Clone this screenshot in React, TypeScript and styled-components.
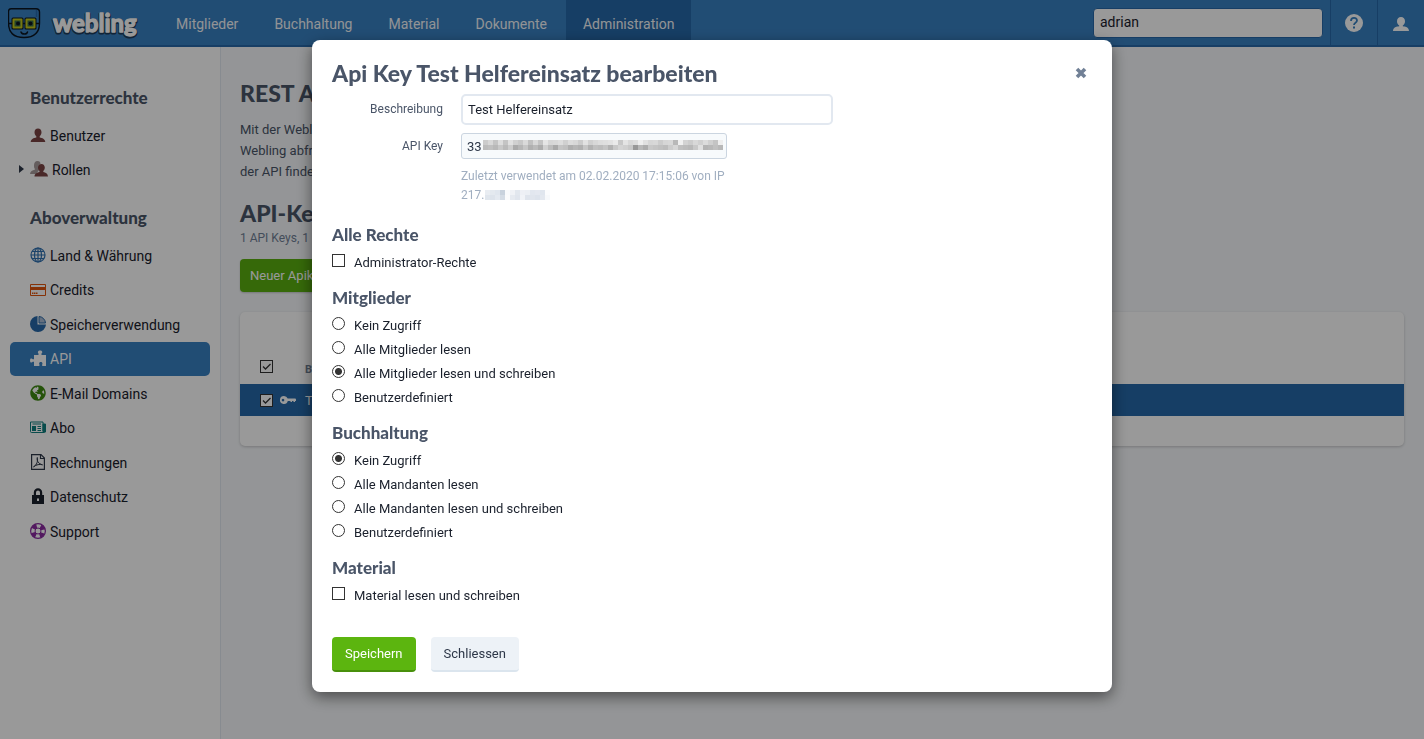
import React, { useId } from "react";
import styled, { createGlobalStyle, css } from "styled-components";
import { FaGlobeAmericas } from "react-icons/fa";

const Global = createGlobalStyle`
  *, *::before, *::after { box-sizing: border-box; }
  html, body, #root { height: 100%; }
  body {
    margin: 0;
    font-family: Roboto, "Noto Sans", sans-serif;
    font-size: 14px;
    color: #1a202c;
    background: #f7f9fc;
  }
  h1, h2, h3, p, ul { margin: 0; padding: 0; }
  h1, h2, h3 { font-family: Lato, "Open Sans", sans-serif; font-weight: 900; color: #4a5568; }
  button, input { font: inherit; }
`;

/* ---------- page ---------- */

const Page = styled.div`
  min-height: 100%;
  display: flex;
  flex-direction: column;
`;

const Header = styled.header`
  display: flex;
  height: 47px;
  background: #3880c2;
  border-bottom: 2px solid #2768a8;
`;

const Brand = styled.a`
  display: flex;
  align-items: center;
  width: 159px;
  padding-left: 8px;
`;

const Nav = styled.nav`
  display: flex;
  flex: 1;
  gap: 2px;
`;

const NavLink = styled.a<{ $active?: boolean }>`
  display: flex;
  align-items: center;
  padding: 2px 17px 0;
  font-size: 14px;
  text-decoration: none;
  color: #f3f6f9;
  background: ${(p) => (p.$active ? "#2568a8" : "transparent")};
`;

const Search = styled.input`
  align-self: center;
  width: 230px;
  height: 30px;
  margin-right: 7px;
  padding: 0 6px 2px;
  border: 1px solid #2768a8;
  border-radius: 4px;
  background: #fff;
  color: #1a202c;
  font-size: 14px;
  outline: none;
`;

const HeaderButton = styled.button`
  display: flex;
  align-items: center;
  justify-content: center;
  width: 47px;
  padding: 0;
  border: 0;
  border-left: 1px solid #2768a8;
  background: none;
  color: #fff;
`;

const Body = styled.div`
  display: flex;
  flex: 1;
`;

const Sidebar = styled.aside`
  width: 221px;
  flex: none;
  padding: 39px 10px 0;
  background: #fff;
  border-right: 1px solid #e2e8f0;
`;

const SideTitle = styled.h2`
  padding-left: 20px;
  font-size: 17px;
  line-height: 24px;
`;

const SideList = styled.ul`
  list-style: none;
  margin: 9px 0 19px;
  li:nth-child(even) { margin-bottom: 1px; }
`;

const SideLink = styled.a<{ $active?: boolean }>`
  position: relative;
  display: flex;
  align-items: center;
  gap: 4px;
  height: 34px;
  padding-left: 20px;
  border-radius: 5px;
  font-size: 14px;
  text-decoration: none;
  color: ${(p) => (p.$active ? "#fff" : "#1a202c")};
  background: ${(p) => (p.$active ? "#3880c2" : "transparent")};
  svg { flex: none; margin-bottom: 3px; }
`;

const Caret = styled.span`
  position: absolute;
  left: 9px;
  top: 12px;
  border: 4px solid transparent;
  border-left: 5px solid #2d3748;
  border-right: 0;
`;

const Main = styled.main`
  flex: 1;
  padding: 30px 20px 30px 19px;
`;

const MainTitle = styled.h1`
  font-size: 23px;
  line-height: 32px;
`;

const Intro = styled.p`
  margin: 10px 0 15px;
  font-size: 13px;
  line-height: 21px;
  color: #4a5568;
`;

const Meta = styled.p`
  margin-top: 1px;
  font-size: 12px;
  line-height: 16px;
  color: #718096;
`;

const NewKey = styled.button`
  display: block;
  height: 33px;
  margin: 13px 0 20px;
  padding: 0 10px;
  border: 0;
  border-radius: 4px;
  background: #5ab010;
  color: #fff;
  font-size: 13px;
  box-shadow: 0 1px 2px rgba(0, 0, 0, 0.2);
`;

const Card = styled.div`
  padding-bottom: 30px;
  border-radius: 5px;
  background: #fff;
  box-shadow: 0 1px 3px rgba(0, 0, 0, 0.2);
`;

const Table = styled.table`
  width: 100%;
  border-collapse: collapse;
  text-align: left;
  th, td { padding: 0; }
  th:first-child, td:first-child { width: 65px; padding-left: 20px; }
  th { height: 72px; padding-bottom: 8px; vertical-align: bottom; font-size: 11px; color: #718096; }
  td { height: 32px; background: #2568a8; color: #fff; font-size: 13px; }
`;

const RowTools = styled.span`
  display: flex;
  align-items: center;
  gap: 7px;
`;

/* ---------- dialog ---------- */

const Overlay = styled.div`
  position: fixed;
  inset: 0;
  padding: 40px 16px;
  overflow: auto;
  background: rgba(0, 0, 0, 0.4);
`;

const Dialog = styled.div`
  max-width: 800px;
  margin: 0 auto;
  padding: 20px;
  border-radius: 8px;
  background: #fff;
  box-shadow: 0 5px 15px rgba(0, 0, 0, 0.5);
`;

const DialogHead = styled.div`
  display: flex;
  align-items: center;
  justify-content: space-between;
  height: 26px;
  margin-bottom: 8px;
  padding-right: 5px;
`;

const DialogTitle = styled.h1`
  font-size: 23px;
  line-height: 26px;
`;

const CloseButton = styled.button`
  display: flex;
  padding: 0;
  border: 0;
  background: none;
  color: #718096;
`;

const Fields = styled.div`
  display: grid;
  row-gap: 8px;
  margin-bottom: 18px;
`;

const Field = styled.div`
  display: grid;
  grid-template-columns: 111px minmax(0, 372px);
  column-gap: 18px;
`;

const FieldLabel = styled.label<{ $tall?: boolean }>`
  line-height: ${(p) => (p.$tall ? 31 : 26)}px;
  text-align: right;
  font-size: 12px;
  color: #4a5568;
`;

const TextInput = styled.input`
  width: 100%;
  height: 31px;
  padding: 0 5px;
  border: 2px solid #e2e8f0;
  border-radius: 5px;
  background: #fff;
  color: #1a202c;
  font-size: 13px;
  outline: none;
`;

const KeyBox = styled.div`
  position: relative;
  width: 266px;
`;

const KeyInput = styled.input`
  display: block;
  width: 100%;
  height: 26px;
  padding: 0 5px;
  border: 1px solid #cbd5e0;
  border-radius: 3px;
  background: #f7fafc;
  color: #2d3748;
  font-size: 13px;
  outline: none;
`;

const KeyMask = styled.span`
  position: absolute;
  left: 22px;
  top: 7px;
  display: flex;
`;

const Hint = styled.p`
  width: 290px;
  margin-top: 8px;
  font-size: 12px;
  line-height: 19px;
  color: #a0aec0;
`;

const Section = styled.fieldset`
  min-width: 0;
  margin: 0 0 12px;
  padding: 0;
  border: 0;
`;

const SectionTitle = styled.legend`
  display: block;
  padding: 0 0 3px;
  font-family: Lato, "Open Sans", sans-serif;
  font-size: 17px;
  font-weight: 900;
  line-height: 24px;
  color: #4a5568;
`;

const Option = styled.label`
  display: flex;
  gap: 9px;
  height: 24px;
  font-size: 13px;
  line-height: 26px;
  color: #1a202c;
`;

const mark = css`
  appearance: none;
  flex: none;
  width: 13px;
  height: 13px;
  margin: 4px 0 0;
  border: 1px solid #333;
  background: #fff;
`;

const Radio = styled.input`
  ${mark}
  border-radius: 50%;
  &:checked { background: radial-gradient(circle, #333 0 3px, #fff 4px); }
`;

const Check = styled.input`
  ${mark}
`;

const TableCheck = styled.input`
  ${mark}
  margin: 0;
  &:checked {
    background: #fff url("data:image/svg+xml,%3Csvg xmlns='http://www.w3.org/2000/svg' viewBox='0 0 11 11'%3E%3Cpath d='M2 5.5l2.5 2.5L9.5 3' fill='none' stroke='%23333' stroke-width='1.3'/%3E%3C/svg%3E");
  }
`;

const Actions = styled.div`
  display: flex;
  gap: 15px;
  margin-top: 30px;
`;

const Action = styled.button<{ $primary?: boolean }>`
  height: 35px;
  padding: 0 13px;
  border: 0;
  border-bottom: 2px solid ${(p) => (p.$primary ? "#48900c" : "#dbe5ee")};
  border-radius: 4px;
  background: ${(p) => (p.$primary ? "#5cb50f" : "#edf2f7")};
  color: ${(p) => (p.$primary ? "#fff" : "#2d3748")};
  font-size: 13px;
`;

/* ---------- drawings ---------- */

const Logo = () => (
  <svg width="140" height="44" viewBox="0 0 140 44" role="img" aria-label="webling">
    <path d="M3 7.800H28Q31.500 8 31.500 11V22Q31.500 36.500 16 36.500Q.5 36.500 .5 22V10.500Q.5 8 3 7.800Z" fill="#3880c2" stroke="#0b1520" strokeWidth="1.400" />
    <path d="M28.500 9V16" stroke="#2768a8" strokeWidth="1.500" />
    <path d="M0 22.500H32" stroke="#0b1520" strokeWidth="1.500" />
    <path d="M5 18h9v9H5zM18 18h9v9h-9z" fill="#3b6f4a" stroke="#0b1520" strokeWidth="3" strokeLinejoin="round" />
    <path d="M5.500 18.500h8v8h-8zM18.500 18.500h8v8h-8z" fill="#3b6f4a" stroke="#c4c71c" strokeWidth="2" strokeLinejoin="round" />
    <circle cx="10" cy="22.500" r="2" fill="#0b1520" />
    <circle cx="22.500" cy="22.500" r="2" fill="#0b1520" />
    <path d="M13 31Q13.500 33 16.500 33Q19 33 19.500 31" fill="none" stroke="#0b1520" strokeWidth="1.500" strokeLinecap="round" />
    <g fontFamily="Lato, sans-serif" fontWeight="700" fontSize="24" strokeLinejoin="round">
      <text x="45" y="32" fill="#1d3c5c" stroke="#1d3c5c" strokeWidth="3">webling</text>
      <text x="45" y="31" fill="#fff" stroke="#fff" strokeWidth="1.300">webling</text>
    </g>
  </svg>
);

const Svg = ({ size = 16, children }: { size?: number; children: React.ReactNode }) => (
  <svg width={size} height={size} viewBox="0 0 16 16" aria-hidden="true">{children}</svg>
);

const bust = "M8 1.500c2.200 0 3.500 1.600 3.500 3.800 0 1.700-.8 3.200-1.800 4v1.200c2.600.5 5.300 1.500 5.600 4.500H.7c.3-3 3-4 5.600-4.500V9.300c-1-.8-1.800-2.300-1.800-4 0-2.200 1.300-3.800 3.500-3.800z";

const PersonIcon = ({ color }: { color: string }) => <Svg><path d={bust} fill={color} /></Svg>;

const HeaderPerson = () => (
  <svg width="18" height="18" viewBox="0 0 18 18" aria-hidden="true">
    <path d="M9 3c2.500 0 4 1.900 4 4.300 0 2-.9 3.400-2.200 4.300v.6c3 .3 6 1 6.200 4.800H1c.2-3.800 3.200-4.500 6.200-4.800v-.6C5.900 10.700 5 9.300 5 7.300 5 4.900 6.500 3 9 3z" fill="#fff" />
  </svg>
);

const RolesIcon = () => (
  <svg width="18" height="18" viewBox="0 0 18 18" aria-hidden="true">
    <path d="M7.500 1C9.500 1 10.500 2.300 10.500 4c-1.500 1-2 3-1 5.500L6 14H0c.2-2.700 2.500-3.700 4.800-4.200V8.800C4.200 8 4 7 4 5.500 4 3 5.200 1 7.500 1z" fill="#a79b9b" />
    <path d="M11.500 4c2 0 3.300 1.500 3.300 3.600 0 1.500-.6 2.700-1.500 3.500v1c2.200.4 4.500 1.400 4.700 4.400H4.500c.2-3 2.800-4 5-4.400v-1c-.9-.8-1.500-2-1.500-3.500C8 5.500 9.500 4 11.500 4z" fill="#7b4343" />
  </svg>
);

const WorldIcon = () => (
  <Svg>
    <g fill="none" stroke="#2f70b0" strokeWidth="1.200">
      <circle cx="8" cy="8" r="7" />
      <ellipse cx="8" cy="8" rx="3.500" ry="7" />
      <path d="M8 1v14M1 8h14M2 4.500h12M2 11.500h12" />
    </g>
  </Svg>
);

const CreditIcon = () => (
  <Svg>
    <path d="M.5 3.500h15v11H.5z" fill="none" stroke="#e0540c" />
    <path d="M1 6h14v3H1zM2 11.500h1.500V13H2zM4 11.500h1.500V13H4zM6 11.500h1.500V13H6z" fill="#e0540c" />
  </Svg>
);

const PieIcon = () => (
  <Svg>
    <path d="M7.500 0A8 8 0 1 0 16 8.500H7.500z" fill="#2768a8" />
    <path d="M9 .5A7 7 0 0 1 15.500 7H9z" fill="#a9bbd4" stroke="#2768a8" />
  </Svg>
);

const PuzzleIcon = () => (
  <Svg>
    <path d="M4 5h4.500V3.500C7.800 3 7.800 2.400 8 1.800 8.200-.1 12-.1 12.200 1.800c.2.600.2 1.200-.7 1.700V5H16v11h-3.800v-1.800c.6-.8.2-2.200-1.400-2.200s-2 1.400-1.400 2.200V16H4v-4.200H2.700c-.5.7-1.200.9-1.900.6-1-.4-1-3.400 0-3.800.7-.3 1.400-.1 1.900.6H4z" fill="#fff" />
  </Svg>
);

const NewsIcon = () => (
  <Svg>
    <path d="M.5 3v9.500q0 1 1 1h13q1 0 1-1V5H13v7.500M.5 3H13v9.500" fill="none" stroke="#107f7f" />
    <path d="M2.500 5H11M7.500 7.500H11M7.500 9.500H11M7.500 11.500H11" stroke="#107f7f" />
    <path d="M2 7h4v5H2zM13 5h3v8h-3z" fill="#107f7f" />
  </Svg>
);

const PdfIcon = () => (
  <Svg>
    <g fill="none" stroke="#2d3748" strokeWidth="1.200">
      <path d="M1.600.6h9.400L14.400 4v11.400H1.600z" />
      <path d="M10.500.6v3.900h3.900" />
      <path d="M3.500 12.800C7 11 8 7 7.300 3.500c-.8 3.500 1.200 6.300 5.200 7.300-2.800-.8-6-.3-9 2z" strokeWidth="1" />
    </g>
  </Svg>
);

const LockIcon = () => (
  <Svg>
    <path fillRule="evenodd" d="M3.800 7V4.400a4.200 4.200 0 0 1 8.400 0V7H14v9H2V7zM6 7h4V4.500a2 2 0 0 0-4 0zM7 10.500v2.500h2v-2.500z" fill="#1a202c" />
  </Svg>
);

const SupportIcon = () => (
  <Svg>
    <circle cx="8" cy="8" r="7.400" fill="none" stroke="#8a2aa0" strokeWidth="1.200" />
    <circle cx="8" cy="8" r="3" fill="none" stroke="#8a2aa0" />
    <circle cx="8" cy="8" r="5.200" fill="none" stroke="#8a2aa0" strokeWidth="4.400" strokeDasharray="4.080 4.080" strokeDashoffset="-2.040" />
  </Svg>
);

const KeyIcon = () => (
  <Svg>
    <path fillRule="evenodd" d="M4 4a4 4 0 0 1 3.700 2.500H15q1 0 1 1V9h-1v1h-1.500V9H12v1h-1.500V9H7.800A4 4 0 1 1 4 4zM3 6.800a1.300 1.300 0 1 0 .01 0z" fill="#fff" />
  </Svg>
);

const HelpIcon = () => (
  <svg width="18" height="18" viewBox="0 0 18 18" aria-hidden="true">
    <circle cx="9" cy="9" r="9" fill="#fff" />
    <path d="M6 7c0-4 6-4 6-.5C12 9 9 8.500 9 11" fill="none" stroke="#3880c2" strokeWidth="1.800" />
    <path d="M8 12.500h2v2H8z" fill="#3880c2" />
  </svg>
);

const CloseIcon = () => (
  <svg width="12" height="12" viewBox="0 0 12 12" aria-hidden="true">
    <path d="M2 2l8 8M10 2l-8 8" stroke="currentColor" strokeWidth="3.600" />
  </svg>
);

/* Mosaic that hides private characters: rows of 5px squares, one hex shade each. */
const Mosaic = ({ rows }: { rows: string[][] }) => (
  <svg width={rows[0].length * 5} height={rows.length * 5} shapeRendering="crispEdges" aria-hidden="true">
    {rows.map((row, y) =>
      row.map((c, x) => <rect key={`${x}-${y}`} x={x * 5} y={y * 5} width="5" height="5" fill={`#${c}`} />)
    )}
  </svg>
);

const greys = (s: string) => s.split(" ").map((c) => c + c + c);

const keyMosaic = [
  greys("cc d8 c4 dd c4 e0 d0 c8 da c0 d8 c4 e5 d6 d8 dd d0 dc d8 cc e2 d0 d8 dd df e2 ea c8 e4 d8 dd ee e0 d6 d8 cc d6 d8 b8 f0 d3 cc d8 d0 dc d0 c4 ee"),
  greys("bc c0 b8 c8 ba cc aa b6 c6 b0 ba ac d0 bc a8 c4 c0 ae b6 b0 c6 b2 c0 bc c4 b2 c8 d4 d0 c8 98 b8 ac c8 c4 c0 bc cc d6 c0 bc b8 c8 e0 b4 b8 c0 b8"),
];

const ipMosaic = [
  "e9edf2 e4e9ef e0e6ee c8d2dd f8fafc f0f2f6 e2e7ee eef0f5 eceff4 e2e7ef e4e8f0 e0e6ee fbfcfd".split(" "),
  "e0e6ed dde3eb e4e9f0 d4dce5 fafbfc e6eaf0 e0e5ed f1f3f7 dfe4ec e0e5ed dde3ec e3e8ef f7f9fb".split(" "),
];

const HintMosaic = styled.span`
  display: inline-block;
  height: 10px;
  margin: 0 0 5px 1px;
  vertical-align: bottom;
  svg { display: block; }
`;

/* ---------- data ---------- */

type Item = { label: string; icon: React.ReactNode; caret?: boolean; active?: boolean };

const topics = ["Mitglieder", "Buchhaltung", "Material", "Dokumente", "Administration"];

const userItems: Item[] = [
  { label: "Benutzer", icon: <PersonIcon color="#7b4343" /> },
  { label: "Rollen", icon: <RolesIcon />, caret: true },
];

const aboItems: Item[] = [
  { label: "Land & Währung", icon: <WorldIcon /> },
  { label: "Credits", icon: <CreditIcon /> },
  { label: "Speicherverwendung", icon: <PieIcon /> },
  { label: "API", icon: <PuzzleIcon />, active: true },
  { label: "E-Mail Domains", icon: <FaGlobeAmericas size={16} color="#3f8a12" /> },
  { label: "Abo", icon: <NewsIcon /> },
  { label: "Rechnungen", icon: <PdfIcon /> },
  { label: "Datenschutz", icon: <LockIcon /> },
  { label: "Support", icon: <SupportIcon /> },
];

const Items = ({ items }: { items: Item[] }) => (
  <SideList>
    {items.map((i) => (
      <li key={i.label}>
        <SideLink href="#" $active={i.active}>
          {i.caret && <Caret />}
          {i.icon}
          {i.label}
        </SideLink>
      </li>
    ))}
  </SideList>
);

const RadioGroup = ({ title, options, selected }: { title: string; options: string[]; selected: number }) => {
  const name = useId();
  return (
    <Section>
      <SectionTitle>{title}</SectionTitle>
      {options.map((o, i) => (
        <Option key={o}>
          <Radio type="radio" name={name} defaultChecked={i === selected} />
          {o}
        </Option>
      ))}
    </Section>
  );
};

const CheckGroup = ({ title, option }: { title: string; option: string }) => (
  <Section>
    <SectionTitle>{title}</SectionTitle>
    <Option>
      <Check type="checkbox" />
      {option}
    </Option>
  </Section>
);

export default function App() {
  return (
    <>
      <Global />
      <Page>
        <Header>
          <Brand href="#"><Logo /></Brand>
          <Nav>
            {topics.map((t) => (
              <NavLink key={t} href="#" $active={t === "Administration"}>{t}</NavLink>
            ))}
          </Nav>
          <Search aria-label="Suche" defaultValue="adrian" />
          <HeaderButton aria-label="Hilfe"><HelpIcon /></HeaderButton>
          <HeaderButton aria-label="Konto"><HeaderPerson /></HeaderButton>
        </Header>
        <Body>
          <Sidebar>
            <SideTitle>Benutzerrechte</SideTitle>
            <Items items={userItems} />
            <SideTitle>Aboverwaltung</SideTitle>
            <Items items={aboItems} />
          </Sidebar>
          <Main>
            <MainTitle>REST API</MainTitle>
            <Intro>
              Mit der Webling API<br />
              Webling abfragen<br />
              der API finden
            </Intro>
            <MainTitle as="h2">API-Keys</MainTitle>
            <Meta>1 API Keys, 1</Meta>
            <NewKey>Neuer Apikey</NewKey>
            <Card>
              <Table>
                <thead>
                  <tr>
                    <th><TableCheck type="checkbox" aria-label="Alle" defaultChecked /></th>
                    <th>B</th>
                  </tr>
                </thead>
                <tbody>
                  <tr>
                    <td>
                      <RowTools>
                        <TableCheck type="checkbox" aria-label="Test" defaultChecked />
                        <KeyIcon />
                      </RowTools>
                    </td>
                    <td>Test</td>
                  </tr>
                </tbody>
              </Table>
            </Card>
          </Main>
        </Body>
      </Page>
      <Overlay>
        <Dialog role="dialog" aria-modal="true" aria-labelledby="dialog-title">
          <DialogHead>
            <DialogTitle id="dialog-title">Api Key Test Helfereinsatz bearbeiten</DialogTitle>
            <CloseButton aria-label="Fenster zu"><CloseIcon /></CloseButton>
          </DialogHead>
          <Fields>
            <Field>
              <FieldLabel $tall htmlFor="description">Beschreibung</FieldLabel>
              <TextInput id="description" defaultValue="Test Helfereinsatz" />
            </Field>
            <Field>
              <FieldLabel htmlFor="key">API Key</FieldLabel>
              <div>
                <KeyBox>
                  <KeyInput id="key" readOnly defaultValue="33" />
                  <KeyMask><Mosaic rows={keyMosaic} /></KeyMask>
                </KeyBox>
                <Hint>
                  Zuletzt verwendet am 02.02.2020 17:15:06 von IP<br />
                  217.<HintMosaic><Mosaic rows={ipMosaic} /></HintMosaic>
                </Hint>
              </div>
            </Field>
          </Fields>
          <CheckGroup title="Alle Rechte" option="Administrator-Rechte" />
          <RadioGroup
            title="Mitglieder"
            selected={2}
            options={["Kein Zugriff", "Alle Mitglieder lesen", "Alle Mitglieder lesen und schreiben", "Benutzerdefiniert"]}
          />
          <RadioGroup
            title="Buchhaltung"
            selected={0}
            options={["Kein Zugriff", "Alle Mandanten lesen", "Alle Mandanten lesen und schreiben", "Benutzerdefiniert"]}
          />
          <CheckGroup title="Material" option="Material lesen und schreiben" />
          <Actions>
            <Action $primary>Speichern</Action>
            <Action>Schliessen</Action>
          </Actions>
        </Dialog>
      </Overlay>
    </>
  );
}
